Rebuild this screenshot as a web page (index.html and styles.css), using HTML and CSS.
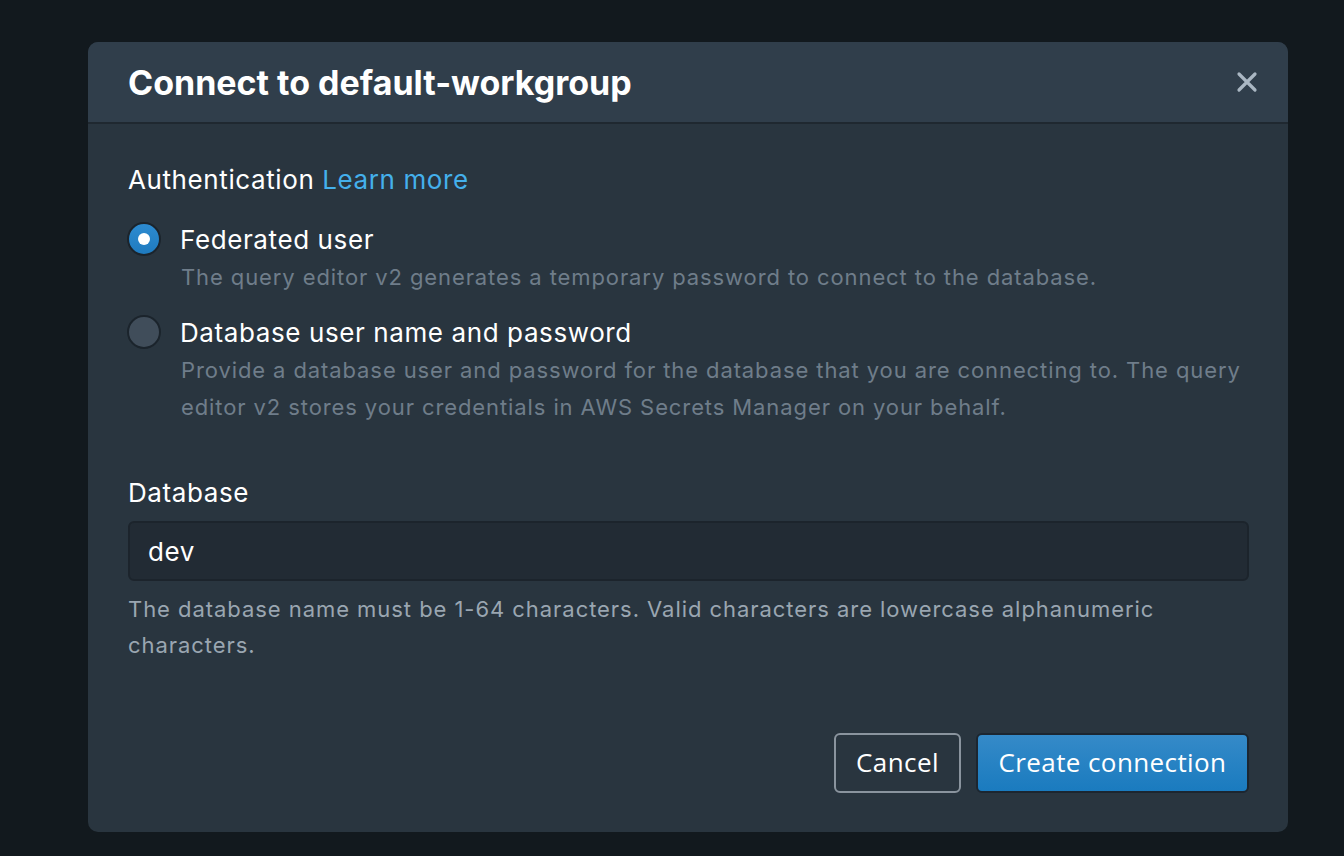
FILE: index.html
```html
<!DOCTYPE html>
<html>
<head>
<meta charset="utf-8">
<link rel="stylesheet" href="styles.css">
</head>
<body>
<div class="page">
  <div class="modal">
    <div class="modal-header">
      <h1 class="title">Connect to default-workgroup</h1>
      <button class="close" aria-label="Close">
        <svg width="22" height="22" viewBox="0 0 22 22"><path d="M3 3 L19 19 M19 3 L3 19" stroke="#aab7c3" stroke-width="3.2" stroke-linecap="round" fill="none"/></svg>
      </button>
    </div>
    <div class="modal-body">
      <div class="section-label">Authentication <a class="link" href="#">Learn more</a></div>
      <div class="radios">
        <div class="radio-row">
          <span class="radio checked"><span class="dot"></span></span>
          <div class="radio-text">
            <div class="radio-label">Federated user</div>
            <div class="radio-desc">The query editor v2 generates a temporary password to connect to the database.</div>
          </div>
        </div>
        <div class="radio-row">
          <span class="radio"></span>
          <div class="radio-text">
            <div class="radio-label">Database user name and password</div>
            <div class="radio-desc">Provide a database user and password for the database that you are connecting to. The query editor v2 stores your credentials in AWS Secrets Manager on your behalf.</div>
          </div>
        </div>
      </div>
      <div class="field">
        <div class="field-label">Database</div>
        <div class="input">dev</div>
        <div class="help">The database name must be 1-64 characters. Valid characters are lowercase alphanumeric characters.</div>
      </div>
      <div class="footer">
        <button class="btn btn-cancel">Cancel</button>
        <button class="btn btn-primary">Create connection</button>
      </div>
    </div>
  </div>
</div>
</body>
</html>
```
FILE: styles.css
```css
* { box-sizing: border-box; }
html, body { margin: 0; padding: 0; }
body {
  background: #12191e;
  font-family: Inter, "Noto Sans", sans-serif;
  width: 1344px;
  height: 856px;
  overflow: hidden;
}
.page {
  padding: 42px 56px 0 88px;
}
.modal {
  width: 1200px;
  background: #29353f;
  border-radius: 10px;
  overflow: hidden;
}
.modal-header {
  height: 82px;
  background: #303e4b;
  border-bottom: 2px solid #1f2830;
  display: flex;
  align-items: center;
  justify-content: space-between;
  padding: 0 30px 0 40px;
}
.title {
  margin: 0;
  color: #ffffff;
  font-size: 34px;
  font-weight: 700;
  letter-spacing: 0;
}
.close {
  background: none;
  border: none;
  padding: 0;
  width: 22px;
  height: 22px;
  display: flex;
}
.modal-body {
  padding: 38px 39px 39px 40px;
}
.section-label {
  font-size: 26px;
  line-height: 36px;
  letter-spacing: 0.6px;
  color: #ffffff;
}
.link {
  color: #44b0ec;
  text-decoration: none;
}
.radios {
  margin-top: 24px;
  display: flex;
  flex-direction: column;
  gap: 19px;
}
.radio-row {
  display: flex;
  gap: 20px;
  align-items: flex-start;
}
.radio {
  flex: none;
  width: 34px;
  height: 34px;
  margin-left: -1px;
  border-radius: 50%;
  background: #404d5a;
  border: 2px solid #1b242c;
  display: flex;
  align-items: center;
  justify-content: center;
}
.radio.checked {
  background: linear-gradient(#2d8bd0, #1f7bbf);
}
.dot {
  width: 12px;
  height: 12px;
  border-radius: 50%;
  background: #ffffff;
}
.radio-label {
  font-size: 26px;
  line-height: 36px;
  letter-spacing: 0.6px;
  color: #ffffff;
  margin-left: -1px;
}
.radio-desc {
  font-size: 22px;
  line-height: 37px;
  letter-spacing: 0.9px;
  color: #6f7d8a;
  margin-top: 1px;
}
.field {
  margin-top: 49px;
}
.field-label {
  font-size: 26px;
  line-height: 36px;
  letter-spacing: 0.6px;
  color: #ffffff;
}
.input {
  margin-top: 10px;
  height: 60px;
  background: #222b34;
  border: 2px solid #1c242c;
  border-radius: 6px;
  padding: 0 18px;
  display: flex;
  align-items: center;
  font-size: 26px;
  letter-spacing: 0.6px;
  color: #ffffff;
}
.help {
  margin-top: 10px;
  font-size: 22px;
  line-height: 36px;
  letter-spacing: 0.95px;
  color: #9aa6b1;
}
.footer {
  margin-top: 70px;
  display: flex;
  justify-content: flex-end;
  gap: 15px;
}
.btn {
  height: 60px;
  border-radius: 6px;
  font-family: "Open Sans", Inter, sans-serif;
  font-size: 26px;
  letter-spacing: 0.4px;
  color: #ffffff;
  padding: 0 10px 2px;
  cursor: pointer;
}
.btn-cancel {
  background: transparent;
  border: 2px solid #8a949e;
  width: 127px;
}
.btn-primary {
  background: linear-gradient(#358ac8, #1a7bbf);
  border: 2px solid #1c2630;
  width: 273px;
}
```
